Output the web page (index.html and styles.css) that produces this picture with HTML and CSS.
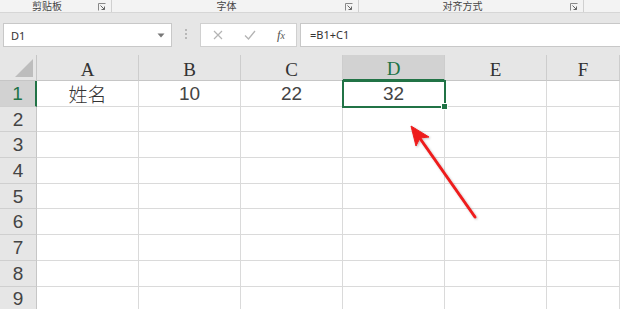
FILE: index.html
```html
<!DOCTYPE html>
<html lang="zh-CN">
<head>
    <meta charset="UTF-8">
    <title>Excel - 求和</title>
    <link rel="stylesheet" href="styles.css">
</head>
<body>
    <div class="ribbon">
        <div class="group g1">
            <span class="label">剪贴板</span>
            <svg class="launcher" width="8" height="8" viewBox="0 0 8 8"><path d="M0.5 7.5V0.5H7.5" fill="none" stroke="#888"/><path d="M2.5 2.5L6.5 6.5M3.5 6.5H6.5V3.5" fill="none" stroke="#666"/></svg>
        </div>
        <div class="group g2">
            <span class="label">字体</span>
            <svg class="launcher" width="8" height="8" viewBox="0 0 8 8"><path d="M0.5 7.5V0.5H7.5" fill="none" stroke="#888"/><path d="M2.5 2.5L6.5 6.5M3.5 6.5H6.5V3.5" fill="none" stroke="#666"/></svg>
        </div>
        <div class="group g3">
            <span class="label">对齐方式</span>
            <svg class="launcher" width="8" height="8" viewBox="0 0 8 8"><path d="M0.5 7.5V0.5H7.5" fill="none" stroke="#888"/><path d="M2.5 2.5L6.5 6.5M3.5 6.5H6.5V3.5" fill="none" stroke="#666"/></svg>
        </div>
        <div class="group g4"></div>
    </div>

    <div class="formula-bar">
        <div class="name-box">
            <span>D1</span>
            <svg width="8" height="5" viewBox="0 0 8 5"><path d="M0.5 0.5H7.5L4 4.5Z" fill="#777"/></svg>
        </div>
        <div class="grip"><i></i><i></i><i></i></div>
        <div class="fx-buttons">
            <svg width="10" height="10" viewBox="0 0 10 10"><path d="M1 1L9 9M9 1L1 9" stroke="#b4b4b4" stroke-width="1.2"/></svg>
            <svg width="12" height="10" viewBox="0 0 12 10"><path d="M1 5.5L4.5 9L11 1" fill="none" stroke="#b4b4b4" stroke-width="1.3"/></svg>
            <span class="fx"><i>f</i><i class="sub">x</i></span>
        </div>
        <div class="formula-input">=B1+C1</div>
    </div>

    <div class="sheet">
        <div class="corner"><span class="tri"></span></div>
        <div class="col-head">A</div>
        <div class="col-head">B</div>
        <div class="col-head">C</div>
        <div class="col-head active">D</div>
        <div class="col-head">E</div>
        <div class="col-head">F</div>

        <div class="row-head active">1</div>
        <div class="cell cjk">姓名</div>
        <div class="cell">10</div>
        <div class="cell">22</div>
        <div class="cell selected">32</div>
        <div class="cell"></div>
        <div class="cell"></div>

        <div class="row-head">2</div>
        <div class="cell"></div><div class="cell"></div><div class="cell"></div><div class="cell"></div><div class="cell"></div><div class="cell"></div>
        <div class="row-head">3</div>
        <div class="cell"></div><div class="cell"></div><div class="cell"></div><div class="cell"></div><div class="cell"></div><div class="cell"></div>
        <div class="row-head">4</div>
        <div class="cell"></div><div class="cell"></div><div class="cell"></div><div class="cell"></div><div class="cell"></div><div class="cell"></div>
        <div class="row-head">5</div>
        <div class="cell"></div><div class="cell"></div><div class="cell"></div><div class="cell"></div><div class="cell"></div><div class="cell"></div>
        <div class="row-head">6</div>
        <div class="cell"></div><div class="cell"></div><div class="cell"></div><div class="cell"></div><div class="cell"></div><div class="cell"></div>
        <div class="row-head">7</div>
        <div class="cell"></div><div class="cell"></div><div class="cell"></div><div class="cell"></div><div class="cell"></div><div class="cell"></div>
        <div class="row-head">8</div>
        <div class="cell"></div><div class="cell"></div><div class="cell"></div><div class="cell"></div><div class="cell"></div><div class="cell"></div>
        <div class="row-head">9</div>
        <div class="cell"></div><div class="cell"></div><div class="cell"></div><div class="cell"></div><div class="cell"></div><div class="cell"></div>
    </div>

    <!-- red annotation arrow pointing at D1 -->
    <svg class="arrow" width="620" height="309" viewBox="0 0 620 309">
        <defs>
            <filter id="shadow" x="-20%" y="-20%" width="140%" height="140%">
                <feDropShadow dx="1" dy="1" stdDeviation="1" flood-color="#000" flood-opacity="0.25"/>
            </filter>
        </defs>
        <g filter="url(#shadow)" fill="#ee1c1c" stroke="#ee1c1c">
            <line x1="475" y1="217" x2="419" y2="137" stroke-width="3" stroke-linecap="round"/>
            <polygon points="411,126 429,137 420,138 416,146" stroke-width="1" stroke-linejoin="round"/>
        </g>
    </svg>
</body>
</html>
```

FILE: styles.css
```css
body, html {
    margin: 0;
    padding: 0;
    width: 620px;
    height: 309px;
    overflow: hidden;
    background-color: #fff;
    font-family: "Noto Sans", "Noto Sans CJK SC", sans-serif;
}

/* ribbon group labels, the top of the ribbon is scrolled away */
.ribbon {
    display: flex;
    height: 12px;
    background-color: #f3f3f3;
    border-bottom: 1px solid #d6d6d6;
    overflow: hidden;
}
.group {
    display: flex;
    align-items: flex-start;
    border-right: 1px solid #d0d0d0;
    box-sizing: border-box;
    height: 12px;
}
.g1 { width: 112px; }
.g2 { width: 247px; }
.g3 { width: 225px; }
.g4 { flex: 1; border-right: none; }
.label {
    flex: 1;
    text-align: center;
    font-family: "Noto Sans CJK SC", sans-serif;
    font-size: 10px;
    line-height: 11px;
    color: #444;
}
.launcher {
    margin: 3px 5px 0 4px;
}

/* name box + formula */
.formula-bar {
    display: flex;
    align-items: flex-start;
    height: 42px;
    padding-top: 10px;
    box-sizing: border-box;
    background-color: #e6e6e6;
}
.name-box {
    display: flex;
    align-items: center;
    justify-content: space-between;
    width: 169px;
    height: 24px;
    margin-left: 3px;
    padding: 0 6px 0 7px;
    box-sizing: border-box;
    background-color: #fff;
    border: 1px solid #c8c8c8;
    font-size: 11px;
    color: #333;
}
.grip {
    display: flex;
    flex-direction: column;
    gap: 2px;
    width: 28px;
    align-items: center;
    padding-top: 6px;
}
.grip i {
    width: 2px;
    height: 2px;
    background-color: #b8b8b8;
}
.fx-buttons {
    display: flex;
    align-items: center;
    justify-content: space-between;
    width: 97px;
    height: 24px;
    padding: 0 11px 0 12px;
    box-sizing: border-box;
    background-color: #fff;
    border: 1px solid #d0d0d0;
}
.fx {
    font-family: "Liberation Serif", serif;
    font-size: 13px;
    color: #555;
}
.fx .sub {
    font-size: 10px;
}
.formula-input {
    flex: 1;
    height: 24px;
    margin-left: 3px;
    padding-left: 9px;
    box-sizing: border-box;
    background-color: #fff;
    border: 1px solid #c8c8c8;
    border-right: none;
    font-size: 11px;
    line-height: 22px;
    color: #333;
}

/* grid */
.sheet {
    display: grid;
    grid-template-columns: 37px repeat(5, 102px) 1fr;
    grid-template-rows: 26px repeat(9, 25.7px);
    background-color: #fff;
}
.corner, .col-head, .row-head, .cell {
    box-sizing: border-box;
    display: flex;
    align-items: center;
    justify-content: center;
    line-height: 1;
}
.corner {
    background-color: #e6e6e6;
    border-right: 1px solid #c6c6c6;
    border-bottom: 1px solid #c6c6c6;
    align-items: flex-end;
    justify-content: flex-end;
    padding: 0 3px 3px 0;
}
.tri {
    width: 0;
    height: 0;
    border-left: 18px solid transparent;
    border-bottom: 18px solid #bdbdbd;
}
.col-head {
    background-color: #e6e6e6;
    border-right: 1px solid #cdcdcd;
    border-bottom: 1px solid #c6c6c6;
    font-family: "Liberation Serif", serif;
    font-size: 19px;
    color: #333;
    padding-top: 3px;
}
.col-head.active {
    background-color: #d2d2d2;
    color: #217346;
    border-bottom: 2px solid #217346;
}
.row-head {
    background-color: #e6e6e6;
    border-right: 1px solid #c6c6c6;
    border-bottom: 1px solid #cfcfcf;
    font-family: "Liberation Sans", sans-serif;
    font-size: 19px;
    color: #444;
}
.row-head.active {
    background-color: #d2d2d2;
    color: #217346;
    border-right: 2px solid #217346;
}
.cell {
    border-right: 1px solid #dadada;
    border-bottom: 1px solid #dadada;
    font-family: "Liberation Sans", sans-serif;
    font-size: 19px;
    color: #444;
}
.cell.cjk {
    font-family: "Noto Sans CJK SC", sans-serif;
    font-weight: 300;
    color: #333;
}
.cell.selected {
    position: relative;
    outline: 2px solid #217346;
    outline-offset: -1px;
    z-index: 1;
}
.cell.selected::after {
    content: "";
    position: absolute;
    right: -4px;
    bottom: -4px;
    width: 5px;
    height: 5px;
    background-color: #217346;
    border: 1px solid #fff;
}

.arrow {
    position: absolute;
    left: 0;
    top: 0;
    pointer-events: none;
    z-index: 5;
}
```
